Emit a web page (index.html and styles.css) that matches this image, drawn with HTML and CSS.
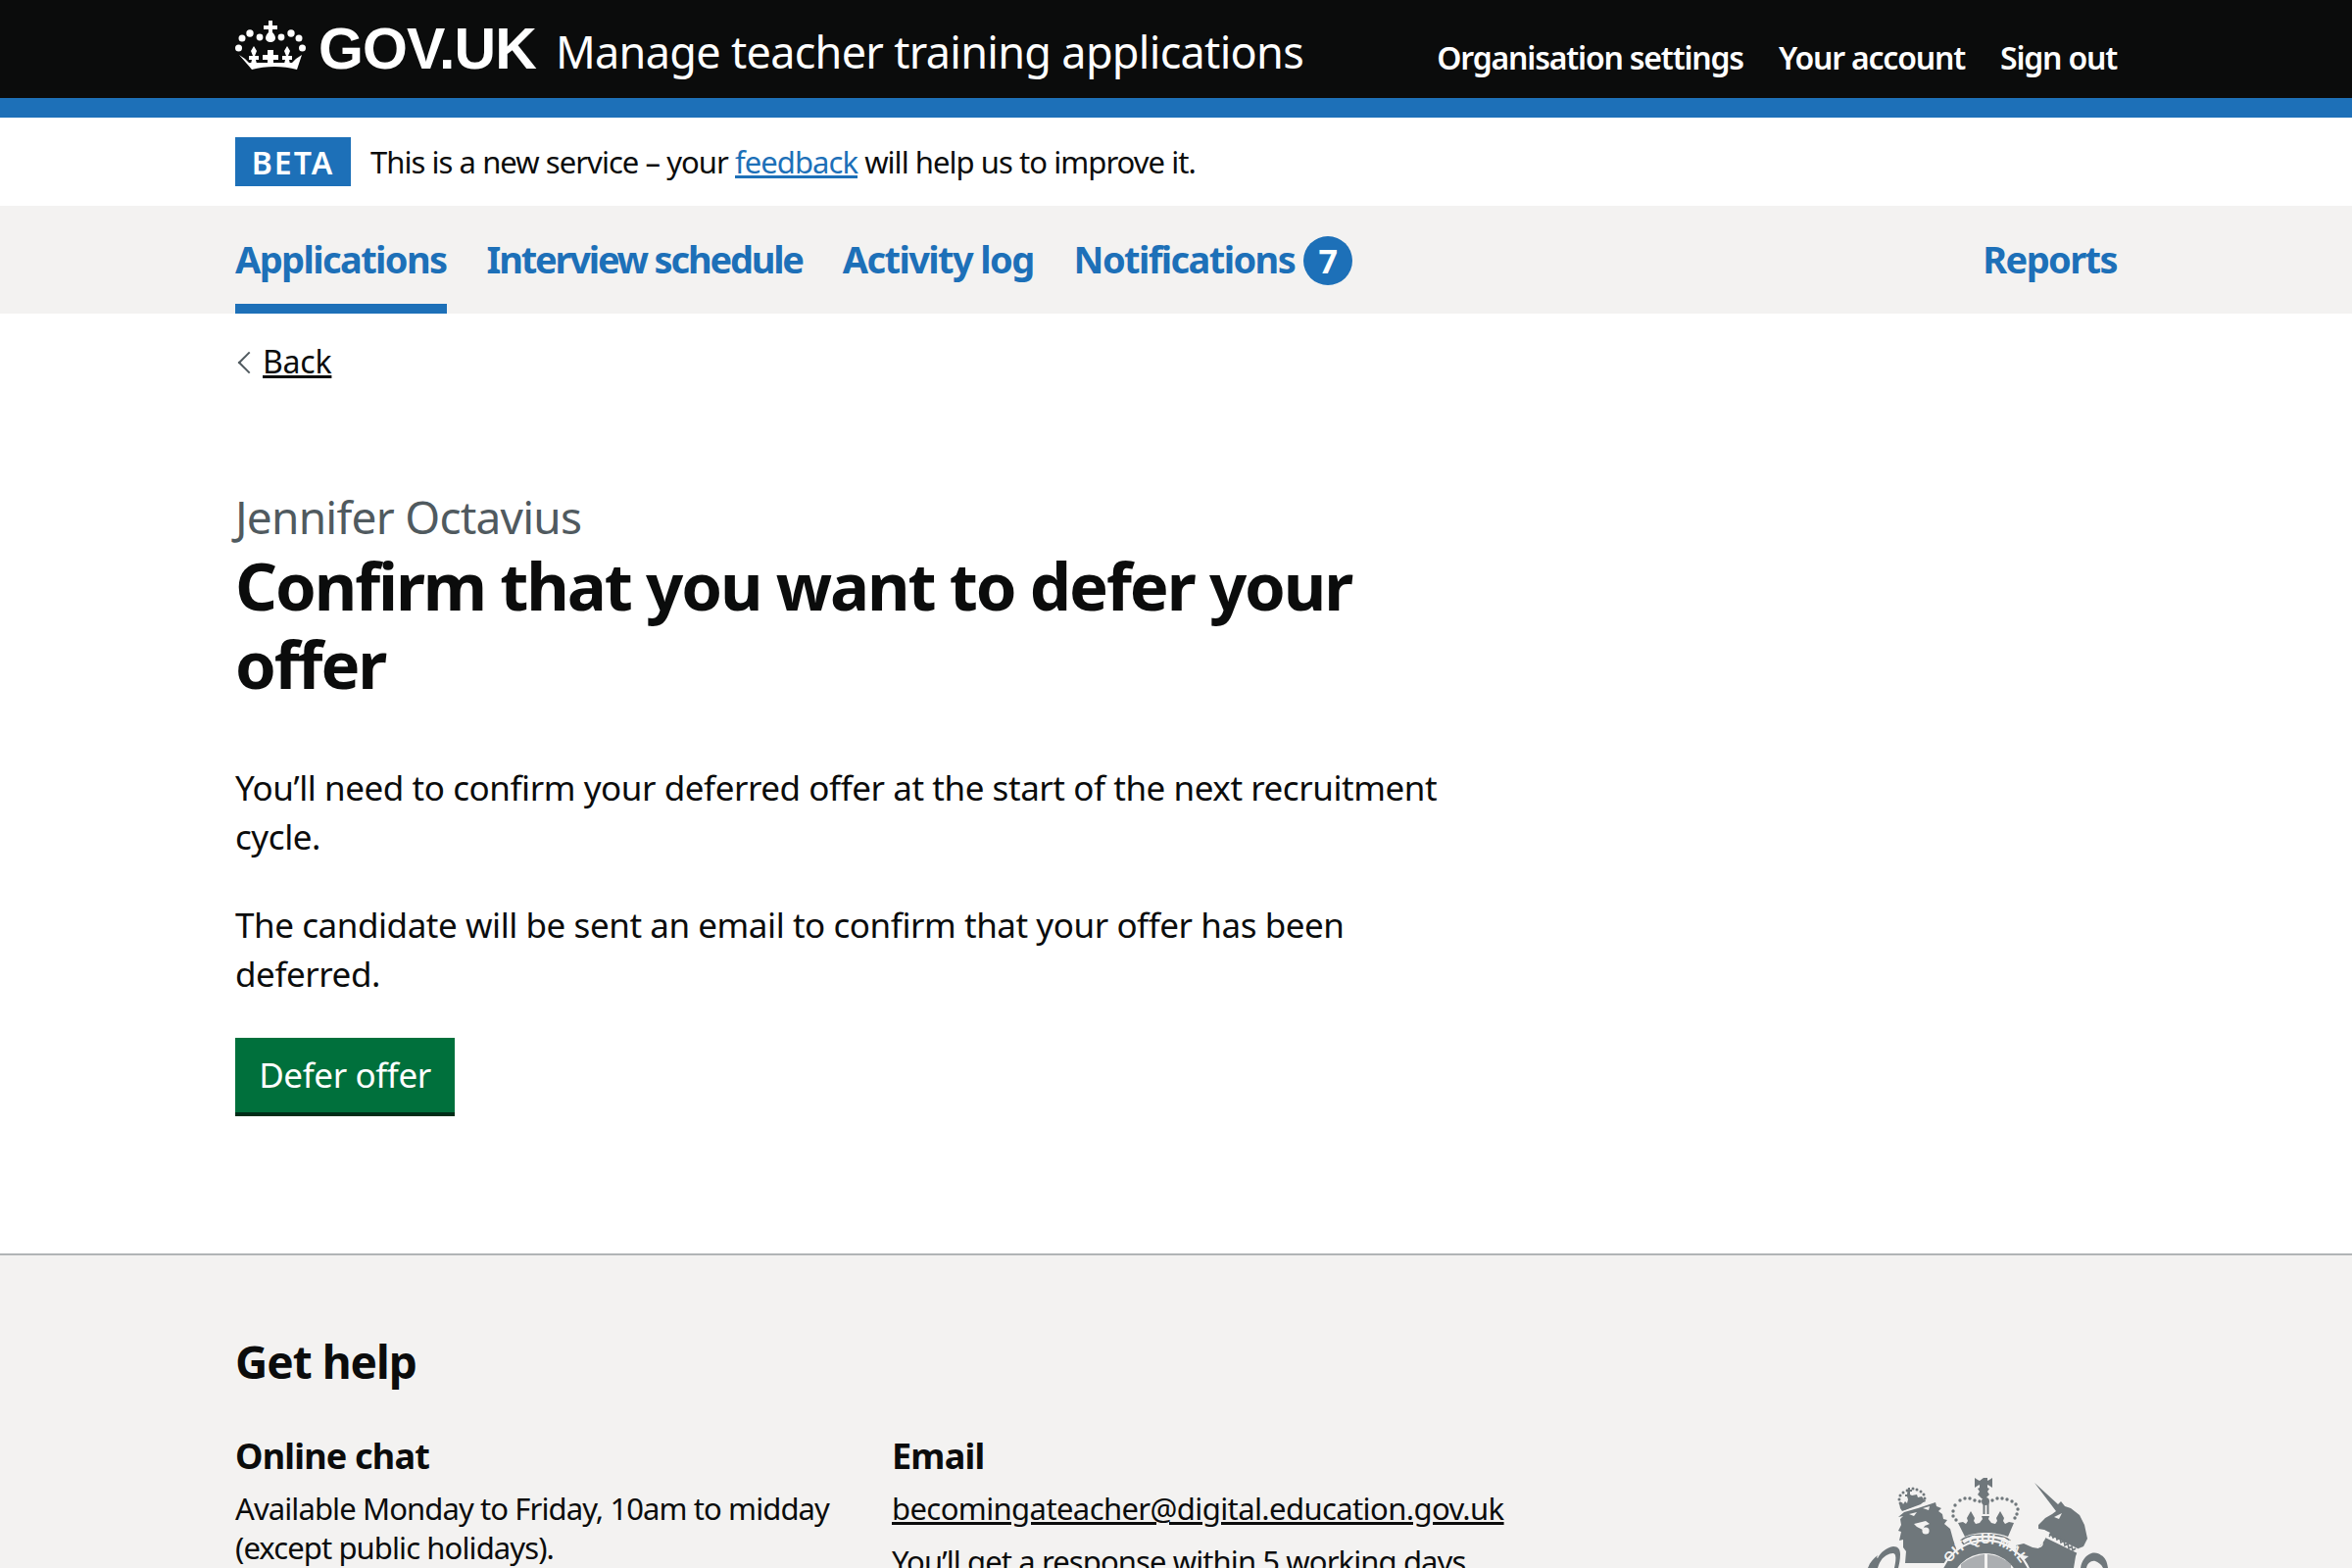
FILE: index.html
```html
<!DOCTYPE html>
<html lang="en">
<head>
<meta charset="utf-8">
<title>Confirm that you want to defer your offer</title>
<link rel="stylesheet" href="styles.css">
</head>
<body>
<header class="header">
  <div class="wrap header-row">
    <div class="brand">
      <svg class="crown" viewBox="4 5 72 50" aria-hidden="true">
        <g fill="#fff">
          <path d="M38 5h4v5h5v4h-5v3c2 2 3 4 3 6s-2 4-5 4-5-2-5-4 1-4 3-6v-3h-5v-4h5z"/>
          <circle cx="29" cy="22" r="3.4"/><circle cx="51" cy="22" r="3.4"/>
          <circle cx="19" cy="18" r="3.7"/><circle cx="61" cy="18" r="3.7"/>
          <circle cx="11" cy="23" r="3.5"/><circle cx="69" cy="23" r="3.5"/>
          <circle cx="7.5" cy="33" r="3.5"/><circle cx="72.5" cy="33" r="3.5"/>
          <path d="M37 35h6v5h5v5h-5v4h-6v-4h-5v-5h5z"/>
          <path d="M23 31l3 5-2 5h4v4h-3l1 4h-6l1-4h-3v-4h4l-2-5z"/>
          <path d="M57 31l3 5-2 5h4v4h-3l1 4h-6l1-4h-3v-4h4l-2-5z"/>
          <path d="M8 40l6 4 4 4h44l4-4 6-4-5 15c-7-2-15-3-23-3s-16 1-23 3z"/>
        </g>
      </svg>
      <div class="brand-text">
        <span class="logotype">GOV.UK</span>
        <span class="service">Manage teacher training applications</span>
      </div>
    </div>
    <nav class="account">
      <a>Organisation settings</a>
      <a>Your account</a>
      <a>Sign out</a>
    </nav>
  </div>
</header>
<div class="stripe"></div>

<div class="wrap beta">
  <strong class="tag">BETA</strong>
  <span class="beta-text">This is a new service – your <a class="link">feedback</a> will help us to improve it.</span>
</div>

<nav class="primary">
  <div class="wrap primary-row">
    <a class="tab active">Applications</a>
    <a class="tab tab-tight">Interview schedule</a>
    <a class="tab">Activity log</a>
    <a class="tab">Notifications <span class="count">7</span></a>
    <a class="tab right">Reports</a>
  </div>
</nav>

<main class="wrap main">
  <a class="back"><span class="chev"></span>Back</a>
  <span class="caption">Jennifer Octavius</span>
  <h1 class="title">Confirm that you want to defer your offer</h1>
  <p class="body">You’ll need to confirm your deferred offer at the start of the next recruitment cycle.</p>
  <p class="body">The candidate will be sent an email to confirm that your offer has been deferred.</p>
  <button class="button">Defer offer</button>
</main>

<footer class="footer">
  <div class="wrap">
    <h2 class="help">Get help</h2>
    <div class="cols">
      <div class="col">
        <h3 class="sub">Online chat</h3>
        <p class="small">Available Monday to Friday, 10am to midday (except public holidays).</p>
      </div>
      <div class="col col-wide">
        <h3 class="sub">Email</h3>
        <p class="small"><a class="plain">becomingateacher@digital.education.gov.uk</a></p>
        <p class="small">You’ll get a response within 5 working days.</p>
      </div>
      <svg class="crest" viewBox="0 0 320 120" aria-hidden="true">
        <g fill="#6f777b">
          <g>
            <circle cx="78" cy="50" r="1.5"/><circle cx="79" cy="46" r="1.5"/><circle cx="82" cy="43" r="1.5"/><circle cx="86" cy="41" r="1.4"/>
            <circle cx="92" cy="39" r="1.5"/><circle cx="96" cy="40" r="1.5"/><circle cx="100" cy="42" r="1.5"/><circle cx="103" cy="45" r="1.5"/><circle cx="104" cy="49" r="1.5"/><circle cx="79" cy="54" r="1.4"/>
            <path d="M87 38h2v2h2v2h-2v3l2 1 5-1 1 3 4-1 2 3-1 3-2 2-19 7-2-3-1-5 3-1 1 2 2-3 2 2 1-4-1-3h-2v-2h2z"/>
            <path d="M82 59l22-9 1 2-22 9z"/>
          </g>
          <path d="M77 68l6-5 14-4 18-6 1 4 5 2-3 3 4 3 1 5 4 1-3 4 6 5 3 11 4 12 1 12H84l1-12-3-4 0-8-4 1 2-9-3-1 3-6-1-6 3-3z"/>
          <path d="M46 120c2-6 6-10 10-13-1 2-1 3 0 3 3-6 9-11 16-12 5 0 7 3 7 8 0 5-1 10-2 14h-4c1-5 2-10 1-13-1-3-5-2-9 0-5 3-7 7-9 13z"/>
          <path d="M164 28h4v3l2-1 3-2v10l-3-2-2-1v3l2 1-2 3 2 3-4 4h-4l-4-4 2-3-2-3 2-1v-3l-2 1-3 2V28l3 2 2 1z"/>
          <circle cx="166" cy="52" r="4"/>
          <g>
            <circle cx="133" cy="62" r="1.7"/><circle cx="135" cy="56" r="1.7"/><circle cx="140" cy="51" r="1.7"/><circle cx="145" cy="49" r="1.7"/><circle cx="150" cy="49" r="1.7"/><circle cx="155" cy="51" r="1.7"/><circle cx="160" cy="52" r="1.7"/>
            <circle cx="173" cy="51" r="1.7"/><circle cx="178" cy="49" r="1.7"/><circle cx="183" cy="49" r="1.7"/><circle cx="188" cy="50" r="1.7"/><circle cx="193" cy="52" r="1.7"/><circle cx="197" cy="55" r="1.7"/><circle cx="199" cy="60" r="1.7"/><circle cx="198" cy="65" r="1.7"/><circle cx="196" cy="69" r="1.7"/>
            <circle cx="133" cy="67" r="1.7"/><circle cx="136" cy="71" r="1.7"/>
          </g>
          <rect x="163.500" y="54" width="2" height="11"/><rect x="167.500" y="54" width="2" height="11"/>
          <path d="M138 74l5-1 3 2 2-3-1-3 4-7 4 7-1 3 2 3 4-1 3-4-1-3h8l-1 3 3 4 4 1 2-3-1-3 4-7 4 7-1 3 2 3 4-2 5 1-6 14c-7-3-15-4-22-4s-16 1-22 4z"/>
          <path d="M141 92c4-4 14-6 25-6s21 2 25 6l-3 4c-5-4-13-6-22-6s-17 2-22 6z" fill="none" stroke="#6f777b" stroke-width="1.5"/>
          <path d="M216 33L240 55l3-3 4 5 6 2 9 7 5 10 3 14-4 8-5 2-3 8-2 12h-56l5-8 5-4-6-1-6-3-1-7 8-2 9 4 6 1 6-8 3-6-3-5-6-1v-4l7-7 7-4 4-3z"/>
          <path d="M263 120c1-7 5-13 11-15 4-1 8 0 10 2 4 2 6 6 7 13h-5c-2-4-5-6-8-7-4-1-8 2-9 7z"/>
          <circle cx="166" cy="140" r="48" stroke="#f3f2f1" stroke-width="2"/>
        </g>
        <g fill="#f3f2f1">
          <path d="M236 68l8-4-3 6z"/>
          <path d="M88 65l8-2-3 4z"/><path d="M102 59l7-2-1 4z"/>
          <path d="M93 75l12-3 4 3-5 2-2 4-6-3z"/>
          <circle cx="105" cy="82" r="3.6"/>
          <path d="M229 85l35 17-2 4-35-17z"/>
          <path d="M226 81l6 3-3 4-5-3z"/>
        </g>
        <path d="M231 88l2-3 2 4 3-2 1 4 3-2 1 5 3-2 1 5 3-2 1 5 3-2 1 4 3-2" fill="none" stroke="#6f777b" stroke-width="1.6"/>
        <circle cx="220.500" cy="95" r="3.500" fill="none" stroke="#f3f2f1" stroke-width="1.6"/>
        <path id="motto" d="M125 128a42 42 0 0 1 82 0" fill="none"/>
        <text class="motto"><textPath href="#motto" startOffset="50%" text-anchor="middle">OIT QUI MAL</textPath></text>
        <circle cx="166" cy="140" r="35" fill="#f3f2f1"/>
        <path d="M141 120v-4c8-6 15-9 24-10v14z" fill="#6f777b" opacity=".55"/>
        <path d="M168 106c9 1 16 4 24 10v4h-24z" fill="#6f777b" opacity=".55"/>
      </svg>
    </div>
  </div>
</footer>
</body>
</html>
```
FILE: styles.css
```css
* { box-sizing: border-box; }
html, body { margin: 0; padding: 0; }
body {
  height: 1600px;
  overflow: hidden;
  font-family: "Noto Sans", "Open Sans", sans-serif;
  color: #0b0c0c;
  background: #fff;
}
.wrap { width: 1920px; margin: 0 auto; }

.header { background: #0b0c0c; height: 100px; color: #fff; }
.header-row { display: flex; justify-content: space-between; height: 100px; }
.brand { display: flex; align-items: center; height: 100px; }
.crown { width: 72px; height: 50px; margin-right: 13px; margin-top: -8px; }
.brand-text { display: flex; align-items: baseline; }
.logotype { font-family: "Liberation Sans", sans-serif; font-weight: 700; font-size: 59px; letter-spacing: -0.9px; margin-right: 20px; }
.service { font-size: 45px; letter-spacing: -0.7px; }
.account { display: flex; gap: 36px; align-items: center; padding-top: 16px; }
.account a { font-size: 32px; font-weight: 600; letter-spacing: -1.2px; color: #fff; }
.stripe { height: 20px; background: #1d70b8; }

.beta { height: 90px; display: flex; align-items: center; }
.tag { background: #1d70b8; color: #fff; font-size: 32px; font-weight: 600; letter-spacing: 2px; width: 118px; height: 50px; display: flex; align-items: center; justify-content: center; }
.beta-text { font-size: 31px; letter-spacing: -0.95px; margin-left: 20px; }
.link { color: #1d70b8; text-decoration: underline; }

.primary { background: #f3f2f1; height: 110px; }
.primary-row { display: flex; gap: 41px; height: 110px; }
.tab { color: #1d70b8; font-size: 38px; font-weight: 700; letter-spacing: -1.6px; height: 110px; display: flex; align-items: center; gap: 9px; padding-bottom: 2px; }
.tab-tight { letter-spacing: -2.2px; }
.tab.active { box-shadow: inset 0 -10px 0 #1d70b8; }
.tab.right { margin-left: auto; }
.count { width: 50px; height: 50px; border-radius: 50%; background: #1d70b8; color: #fff; display: flex; align-items: center; justify-content: center; font-size: 34px; letter-spacing: 0; margin-top: 4px; }

.main { height: 959px; }
.back { display: block; padding-top: 27px; font-size: 32px; line-height: 44px; height: 72px; letter-spacing: -0.2px; text-decoration: underline; padding-left: 28px; position: relative; }
.chev { position: absolute; left: 6px; top: 42px; width: 16px; height: 16px; border-left: 2.5px solid #505a5f; border-bottom: 2.5px solid #505a5f; transform: rotate(45deg); }
.caption { display: block; font-size: 46px; letter-spacing: -0.75px; color: #505a5f; line-height: 60px; margin-top: 105px; }
.title { font-size: 67px; font-weight: 700; line-height: 80px; letter-spacing: -2.1px; margin: 0 0 62px; width: 1280px; }
.body { font-size: 35px; letter-spacing: -0.44px; line-height: 50px; margin: 0 0 40px; width: 1280px; }
.button { display: block; background: #00703c; color: #fff; border: 0; border-bottom: 4px solid #002d18; height: 80px; width: 224px; font: 35px "Noto Sans", sans-serif; letter-spacing: -0.4px; padding: 0 0 2px; }

.footer { background: #f3f2f1; border-top: 2px solid #b1b4b6; height: 400px; }
.help { font-size: 46px; font-weight: 700; letter-spacing: -1px; line-height: 60px; margin: 0; padding-top: 78px; height: 180px; }
.cols { display: flex; }
.col { width: 670px; flex-shrink: 0; }
.col-wide { width: 680px; }
.sub { font-size: 36px; line-height: 50px; font-weight: 700; letter-spacing: -0.8px; margin: 0 0 8px; }
.small { font-size: 31px; letter-spacing: -0.9px; line-height: 40px; margin: 0 0 14px; }
.plain { text-decoration: underline; letter-spacing: -0.6px; }
.crest { width: 320px; height: 120px; flex-shrink: 0; margin: 19px -20px 0 270px; }
.motto { font: 700 14px "Liberation Sans", sans-serif; fill: #f3f2f1; }
```
